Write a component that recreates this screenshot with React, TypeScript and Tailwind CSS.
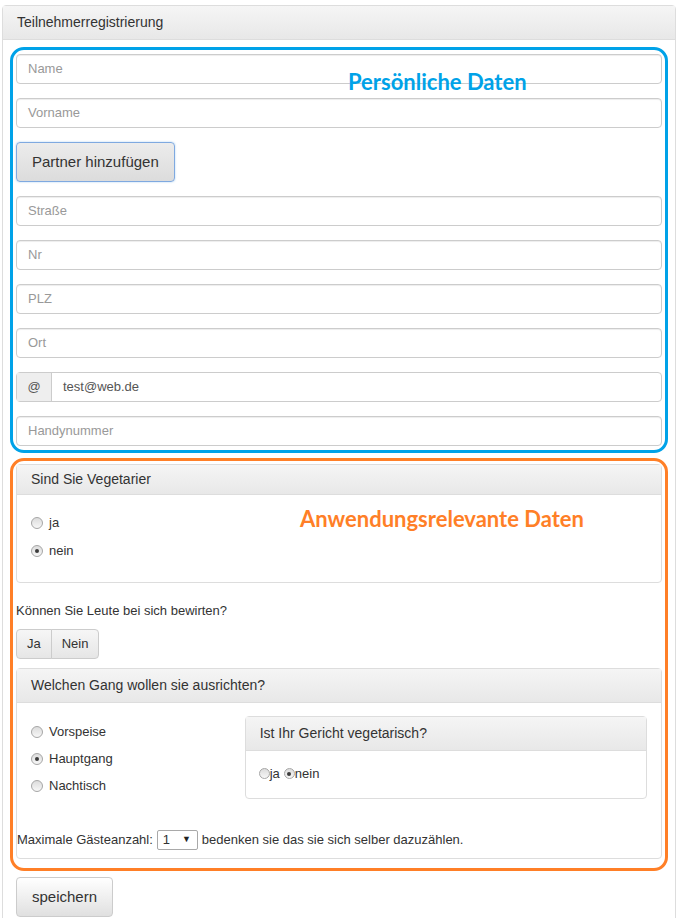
import React from "react";

function Radio({ checked = false, size = "md" }: { checked?: boolean; size?: "md" | "sm" }) {
  const box = size === "md" ? "h-[12px] w-[12px]" : "h-[11px] w-[11px]";
  return (
    <span
      className={`${box} inline-flex shrink-0 items-center justify-center rounded-full border border-[#a6a6a6] bg-gradient-to-b from-[#dcdcdc] to-[#f7f7f7]`}
    >
      {checked && <span className="h-[4px] w-[4px] rounded-full bg-[#3c3c3c]" />}
    </span>
  );
}

function TextInput({ placeholder }: { placeholder: string }) {
  return (
    <div className="flex h-[30px] items-center rounded-[4px] border border-[#cccccc] bg-white px-[11px] text-[13px] text-[#999999] shadow-[inset_0_1px_1px_rgba(0,0,0,0.075)]">
      {placeholder}
    </div>
  );
}

function PanelHeading({ children, h }: { children: React.ReactNode; h: string }) {
  return (
    <div
      className={`${h} flex items-center border-b border-[#dddddd] bg-gradient-to-b from-[#f5f5f5] to-[#e8e8e8] px-[14px] text-[14px] text-[#333333]`}
    >
      {children}
    </div>
  );
}

export default function App() {
  return (
    <div className="min-h-screen bg-white pt-[5px] pl-[2px] font-['Liberation_Sans',Arial,sans-serif] text-[#333333]">
      <div className="w-[674px] rounded-t-[4px] border border-[#dddddd] bg-white">
        {/* Panel title */}
        <div className="flex h-[34px] items-center border-b border-[#dddddd] bg-gradient-to-b from-[#f5f5f5] to-[#e8e8e8] px-[14px] text-[14px]">
          Teilnehmerregistrierung
        </div>

        <div className="px-[7px] pt-[7px] pb-[20px]">
          {/* Persönliche Daten */}
          <div className="relative rounded-[14px] border-[3px] border-[#00a2e8] px-[3px] pt-[4px] pb-[4px]">
            <div className="flex flex-col gap-[14px]">
              <TextInput placeholder="Name" />
              <TextInput placeholder="Vorname" />
              <div>
                <button className="h-[40px] rounded-[4px] border border-[#7fa9e0] bg-gradient-to-b from-[#ececec] to-[#dcdcdc] px-[15px] text-[15px] text-[#333333] shadow-[0_0_2px_rgba(102,175,233,0.6)]">
                  Partner hinzufügen
                </button>
              </div>
              <TextInput placeholder="Straße" />
              <TextInput placeholder="Nr" />
              <TextInput placeholder="PLZ" />
              <TextInput placeholder="Ort" />
              <div className="flex h-[30px] rounded-[4px] border border-[#cccccc] text-[13px]">
                <div className="flex w-[35px] items-center justify-center border-r border-[#cccccc] bg-[#eeeeee] text-[#555555]">
                  @
                </div>
                <div className="flex flex-1 items-center px-[11px] text-[#555555]">test@web.de</div>
              </div>
              <TextInput placeholder="Handynummer" />
            </div>
            <div className="absolute left-[335px] top-[20px] font-['Lato',sans-serif] text-[22px] leading-[24px] font-bold text-[#00a2e8]">
              Persönliche Daten
            </div>
          </div>

          {/* Anwendungsrelevante Daten */}
          <div className="relative mt-[5px] rounded-[14px] border-[3px] border-[#ff7f27] px-[3px] pt-[3px] pb-[9px]">
            <div className="rounded-[4px] border border-[#dddddd]">
              <PanelHeading h="h-[30px]">Sind Sie Vegetarier</PanelHeading>
              <div className="flex flex-col px-[14px] pt-[14px] pb-[17px] text-[13px]">
                <div className="flex h-[28px] items-center gap-[6px]">
                  <Radio />
                  <span>ja</span>
                </div>
                <div className="flex h-[28px] items-center gap-[6px]">
                  <Radio checked />
                  <span>nein</span>
                </div>
              </div>
            </div>

            <div className="mt-[19px] text-[13px] leading-[18px]">Können Sie Leute bei sich bewirten?</div>

            <div className="mt-[9px] flex h-[30px] w-fit text-[13px]">
              <button className="rounded-l-[4px] border border-[#cccccc] bg-gradient-to-b from-[#f6f6f6] to-[#e6e6e6] px-[10px] text-[#333333]">
                Ja
              </button>
              <button className="-ml-px rounded-r-[4px] border border-[#cccccc] bg-gradient-to-b from-[#f6f6f6] to-[#e6e6e6] px-[10px] text-[#333333]">
                Nein
              </button>
            </div>

            <div className="mt-[9px] rounded-[4px] border border-[#dddddd]">
              <PanelHeading h="h-[34px]">Welchen Gang wollen sie ausrichten?</PanelHeading>
              <div className="px-[14px] pt-[13px] pb-[8px]">
                <div className="flex">
                  <div className="flex w-[214px] flex-col pt-[2px] text-[13px]">
                    {[
                      ["Vorspeise", false],
                      ["Hauptgang", true],
                      ["Nachtisch", false],
                    ].map(([label, checked]) => (
                      <div key={label as string} className="flex h-[27px] items-center gap-[6px]">
                        <Radio checked={checked as boolean} />
                        <span>{label}</span>
                      </div>
                    ))}
                  </div>
                  <div className="w-[403px] rounded-[4px] border border-[#dddddd]">
                    <PanelHeading h="h-[34px]">Ist Ihr Gericht vegetarisch?</PanelHeading>
                    <div className="flex h-[45px] items-center px-[13px] text-[13px]">
                      <Radio size="sm" />
                      <span>ja</span>
                      <span className="ml-[4px] flex">
                        <Radio checked size="sm" />
                      </span>
                      <span>nein</span>
                    </div>
                  </div>
                </div>

                <div className="mt-[31px] -ml-[14px] flex h-[20px] items-center text-[13px]">
                  <span>Maximale Gästeanzahl:</span>
                  <div className="mx-[4px] flex h-[20px] w-[41px] items-center justify-between rounded-[2px] border border-[#a9a9a9] bg-white pr-[6px] pl-[5px]">
                    <span>1</span>
                    <span className="text-[9px] text-[#222222]">▼</span>
                  </div>
                  <span>bedenken sie das sie sich selber dazuzählen.</span>
                </div>
              </div>
            </div>

            <div className="absolute left-[287px] top-[46px] font-['Lato',sans-serif] text-[22px] leading-[24px] font-bold text-[#ff7f27]">
              Anwendungsrelevante Daten
            </div>
          </div>

          <button className="mt-[6px] ml-[6px] h-[40px] rounded-[4px] border border-[#cccccc] bg-gradient-to-b from-white to-[#e0e0e0] px-[15px] text-[15px] text-[#333333]">
            speichern
          </button>
        </div>
      </div>
    </div>
  );
}
